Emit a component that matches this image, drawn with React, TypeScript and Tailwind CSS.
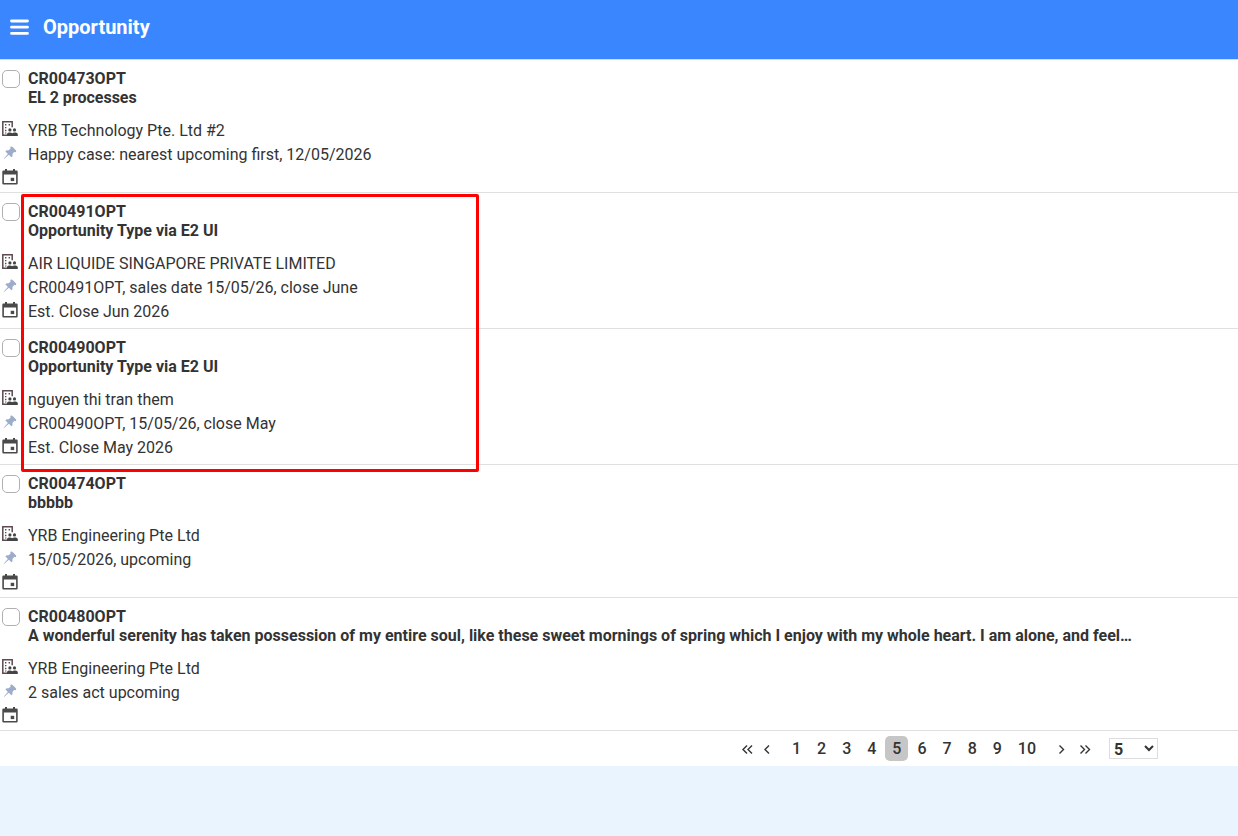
interface Opportunity {
  code: string;
  name: string;
  account: string;
  activity: string;
  closing?: string;
}

const opportunities: Opportunity[] = [
  {
    code: "CR00473OPT",
    name: "EL 2 processes",
    account: "YRB Technology Pte. Ltd #2",
    activity: "Happy case: nearest upcoming first, 12/05/2026",
  },
  {
    code: "CR00491OPT",
    name: "Opportunity Type via E2 UI",
    account: "AIR LIQUIDE SINGAPORE PRIVATE LIMITED",
    activity: "CR00491OPT, sales date 15/05/26, close June",
    closing: "Est. Close Jun 2026",
  },
  {
    code: "CR00490OPT",
    name: "Opportunity Type via E2 UI",
    account: "nguyen thi tran them",
    activity: "CR00490OPT, 15/05/26, close May",
    closing: "Est. Close May 2026",
  },
  {
    code: "CR00474OPT",
    name: "bbbbb",
    account: "YRB Engineering Pte Ltd",
    activity: "15/05/2026, upcoming",
  },
  {
    code: "CR00480OPT",
    name: "A wonderful serenity has taken possession of my entire soul, like these sweet mornings of spring which I enjoy with my whole heart. I am alone, and feel…",
    account: "YRB Engineering Pte Ltd",
    activity: "2 sales act upcoming",
  },
];

const pages = [1, 2, 3, 4, 5, 6, 7, 8, 9, 10];

function AccountIcon() {
  return (
    <svg viewBox="0 0 16 16" className="size-4" fill="none" aria-hidden="true">
      <path
        d="M5.5 14.3H.8V.8h9.400v5.400"
        stroke="#5c4a50"
        strokeWidth="1.5"
      />
      <path
        d="M3 3h1.400v1.400H3zM6.600 3H8v1.400H6.600zM3 5.900h1.400v1.400H3zM3 8.800h1.400v1.400H3zM3 11.400h1.400v1.200H3z"
        fill="#5c4a50"
      />
      <circle cx="7.900" cy="8.900" r="1.600" fill="#444" />
      <circle cx="12.500" cy="8.900" r="1.600" fill="#444" />
      <path
        d="M5 15v-1.700c0-1.300 1.200-1.800 2.900-1.800 1 0 1.800.200 2.300.700.500-.5 1.300-.7 2.300-.7 1.900 0 3.300.5 3.300 1.800V15z"
        fill="#444"
      />
    </svg>
  );
}

function PinIcon() {
  return (
    <svg viewBox="0 0 16 16" className="size-4" aria-hidden="true">
      <path
        d="M8.600 1.800c.8-.8 1.400-.3 2 .2l3 3c.6.6 1 1.300.2 1.900-.6.400-1.200.2-1.700.1L10.400 8.900c.3 1.300.1 2.600-.9 3.400L6.800 9.700 2.300 13.800l-.5-.4L5.900 8.900 3.300 6.200c.8-1 2.100-1.200 3.400-.9l1.900-1.800c-.2-.5-.4-1.200 0-1.700z"
        fill="#9caccb"
      />
    </svg>
  );
}

function CalendarIcon() {
  return (
    <svg viewBox="0 0 16 16" className="size-4" aria-hidden="true">
      <path
        d="M3 0h2v1.500h6V0h2v1.500h1.500a1.200 1.200 0 0 1 1.200 1.200v11.600a1.200 1.200 0 0 1-1.200 1.200h-13A1.200 1.200 0 0 1 .3 14.300V2.700a1.200 1.200 0 0 1 1.200-1.200H3zM1.900 5.600v8.300h12.200V5.600z"
        fill="#4a4a4a"
        fillRule="evenodd"
      />
      <path d="M8.700 8.800h3.500v3.300H8.700z" fill="#4a4a4a" />
    </svg>
  );
}

function Row({ item }: { item: Opportunity }) {
  return (
    <li className="border-b border-[#e0e0e0] pt-[9px] pb-1">
      <div className="flex">
        <div className="w-7 shrink-0 pl-0.5 pt-px">
          <input
            type="checkbox"
            aria-label={item.code}
            className="block size-[18px] appearance-none rounded-[5px] border border-[#b0b0b0] bg-white"
          />
        </div>
        <div className="min-w-0 font-bold leading-[19px]">
          <div>{item.code}</div>
          <div>{item.name}</div>
        </div>
      </div>

      <div className="mt-3 leading-6">
        <div className="flex h-6">
          <span className="w-7 shrink-0 pl-0.5 pt-0.5">
            <AccountIcon />
          </span>
          {item.account}
        </div>
        <div className="flex h-6">
          <span className="w-7 shrink-0 pl-0.5 pt-0.5">
            <PinIcon />
          </span>
          {item.activity}
        </div>
        <div className={item.closing ? "flex h-6" : "flex h-[21px]"}>
          <span className="w-7 shrink-0 pl-0.5 pt-0.5">
            <CalendarIcon />
          </span>
          {item.closing}
        </div>
      </div>
    </li>
  );
}

function Arrow({ label, d, className }: { label: string; d: string; className: string }) {
  return (
    <button type="button" aria-label={label} className={className}>
      <svg viewBox="0 0 12 12" className="size-3" fill="none" stroke="#333" strokeWidth="1.4">
        <path d={d} />
      </svg>
    </button>
  );
}

export default function App() {
  return (
    <div className="min-h-screen bg-[#eaf4ff] font-['Roboto',sans-serif] text-base text-[#333]">
      <header className="flex h-[60px] items-center border-b border-[#dcdcdc] bg-[#3a86ff] pb-1.5 pl-2.5 text-white">
        <button type="button" aria-label="Menu" className="mr-3.5 w-[19px]">
          <svg viewBox="0 0 19 16" className="h-4 w-[19px]" stroke="currentColor" strokeWidth="2.8" strokeLinecap="round">
            <path d="M1.500 2h16M1.500 8.200h16M1.500 14.400h16" />
          </svg>
        </button>
        <h1 className="text-xl font-bold">Opportunity</h1>
      </header>

      <main className="bg-white">
        <div className="relative">
          <ul>
            {opportunities.map((item) => (
              <Row key={item.code} item={item} />
            ))}
          </ul>
          <div className="pointer-events-none absolute left-[21px] top-[134px] h-[278px] w-[458px] rounded-xs border-3 border-[#ff0000]" />
        </div>

        <nav aria-label="Pages" className="flex h-[35px] items-center justify-end pr-20 font-medium">
          <Arrow label="First page" d="M6 2.500l-4 4 4 4M11 2.500l-4 4 4 4" className="mr-2" />
          <Arrow label="Previous page" d="M8 2.500l-4 4 4 4" className="mr-[11px]" />
          {pages.map((page) => (
            <button
              type="button"
              key={page}
              className={
                page === 5
                  ? "mx-px h-[25px] rounded-[5px] bg-[#c6c6c6] px-[7px]"
                  : "mx-px h-[25px] px-[7px]"
              }
            >
              {page}
            </button>
          ))}
          <Arrow label="Next page" d="M4.500 2.500l4 4-4 4" className="ml-[11px]" />
          <Arrow label="Last page" d="M1.500 2.500l4 4-4 4M6.500 2.500l4 4-4 4" className="ml-3 mr-[18px]" />
          <select
            aria-label="Rows per page"
            defaultValue="5"
            className="h-[21px] w-[49px] border border-[#ddd] bg-white pb-px font-bold leading-[18px]"
          >
            <option>5</option>
            <option>10</option>
            <option>20</option>
          </select>
        </nav>
      </main>
    </div>
  );
}
